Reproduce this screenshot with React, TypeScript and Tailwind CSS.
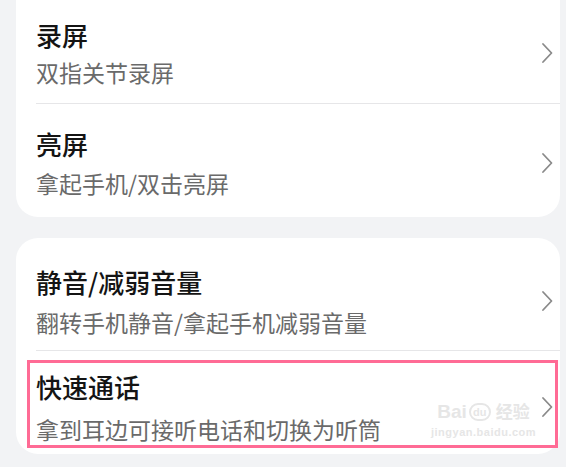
import React from "react";

const Chevron = () => (
  <svg width="14" height="22" viewBox="0 0 14 22" className="shrink-0">
    <path d="M3 2 L11.5 11 L3 20" fill="none" stroke="#8a8a8a" strokeWidth="1.8" strokeLinecap="round" strokeLinejoin="round" />
  </svg>
);

type RowProps = { title: string; sub: string; className?: string; gap: string };

const Row = ({ title, sub, className, gap }: RowProps) => (
  <div className={"flex items-center pl-[20px] pr-[6px] " + (className ?? "")}>
    <div className={"flex flex-1 flex-col " + gap}>
      <div className="text-[26px] leading-[34px] font-medium text-[#141414]">{title}</div>
      <div className="text-[23px] leading-[30px] text-[#6a6a6a]">{sub}</div>
    </div>
    <Chevron />
  </div>
);

const Divider = () => <div className="ml-[20px] h-px bg-[#e6e6e8]" />;

export default function App() {
  return (
    <div
      className="relative h-[467px] w-[566px] overflow-hidden bg-[#f2f3f5]"
      style={{ fontFamily: '"Noto Sans CJK SC", "Noto Sans", sans-serif' }}
    >
      <div className="ml-[16px] mr-[6px] rounded-b-[22px] bg-white">
        <Row title="录屏" sub="双指关节录屏" gap="gap-[5px]" className="pt-[18px] pb-[16px]" />
        <Divider />
        <Row title="亮屏" sub="拿起手机/双击亮屏" gap="gap-[7px]" className="pt-[23px] pb-[19px]" />
      </div>
      <div className="relative ml-[16px] mr-[6px] mt-[21px] rounded-[22px] bg-white">
        <Row title="静音/减弱音量" sub="翻转手机静音/拿起手机减弱音量" gap="gap-[8px]" className="pt-[27px] pb-[13px]" />
        <Divider />
        <Row title="快速通话" sub="拿到耳边可接听电话和切换为听筒" gap="gap-[10px]" className="pt-[19px] pb-[10px]" />
        <div className="pointer-events-none absolute left-[11px] right-[2px] top-[122px] h-[88px] border-[3px] border-[#ff6b95]" />
        <div className="pointer-events-none absolute left-[415px] top-[164px] flex flex-col items-center leading-none text-[#e6e6e6]" style={{ fontFamily: '"Liberation Sans", "Noto Sans CJK SC", sans-serif' }}>
          <div className="flex items-end gap-[2px]">
            <span className="text-[19px] font-bold">Bai</span>
            <span className="flex h-[18px] w-[22px] items-center justify-center rounded-full border-[2px] border-[#e6e6e6] text-[11px] font-bold">du</span>
            <span className="ml-[3px] text-[17px] font-bold">经验</span>
          </div>
          <div className="mt-[6px] text-[11px] font-bold tracking-[0.5px]">jingyan.baidu.com</div>
        </div>
      </div>
    </div>
  );
}
